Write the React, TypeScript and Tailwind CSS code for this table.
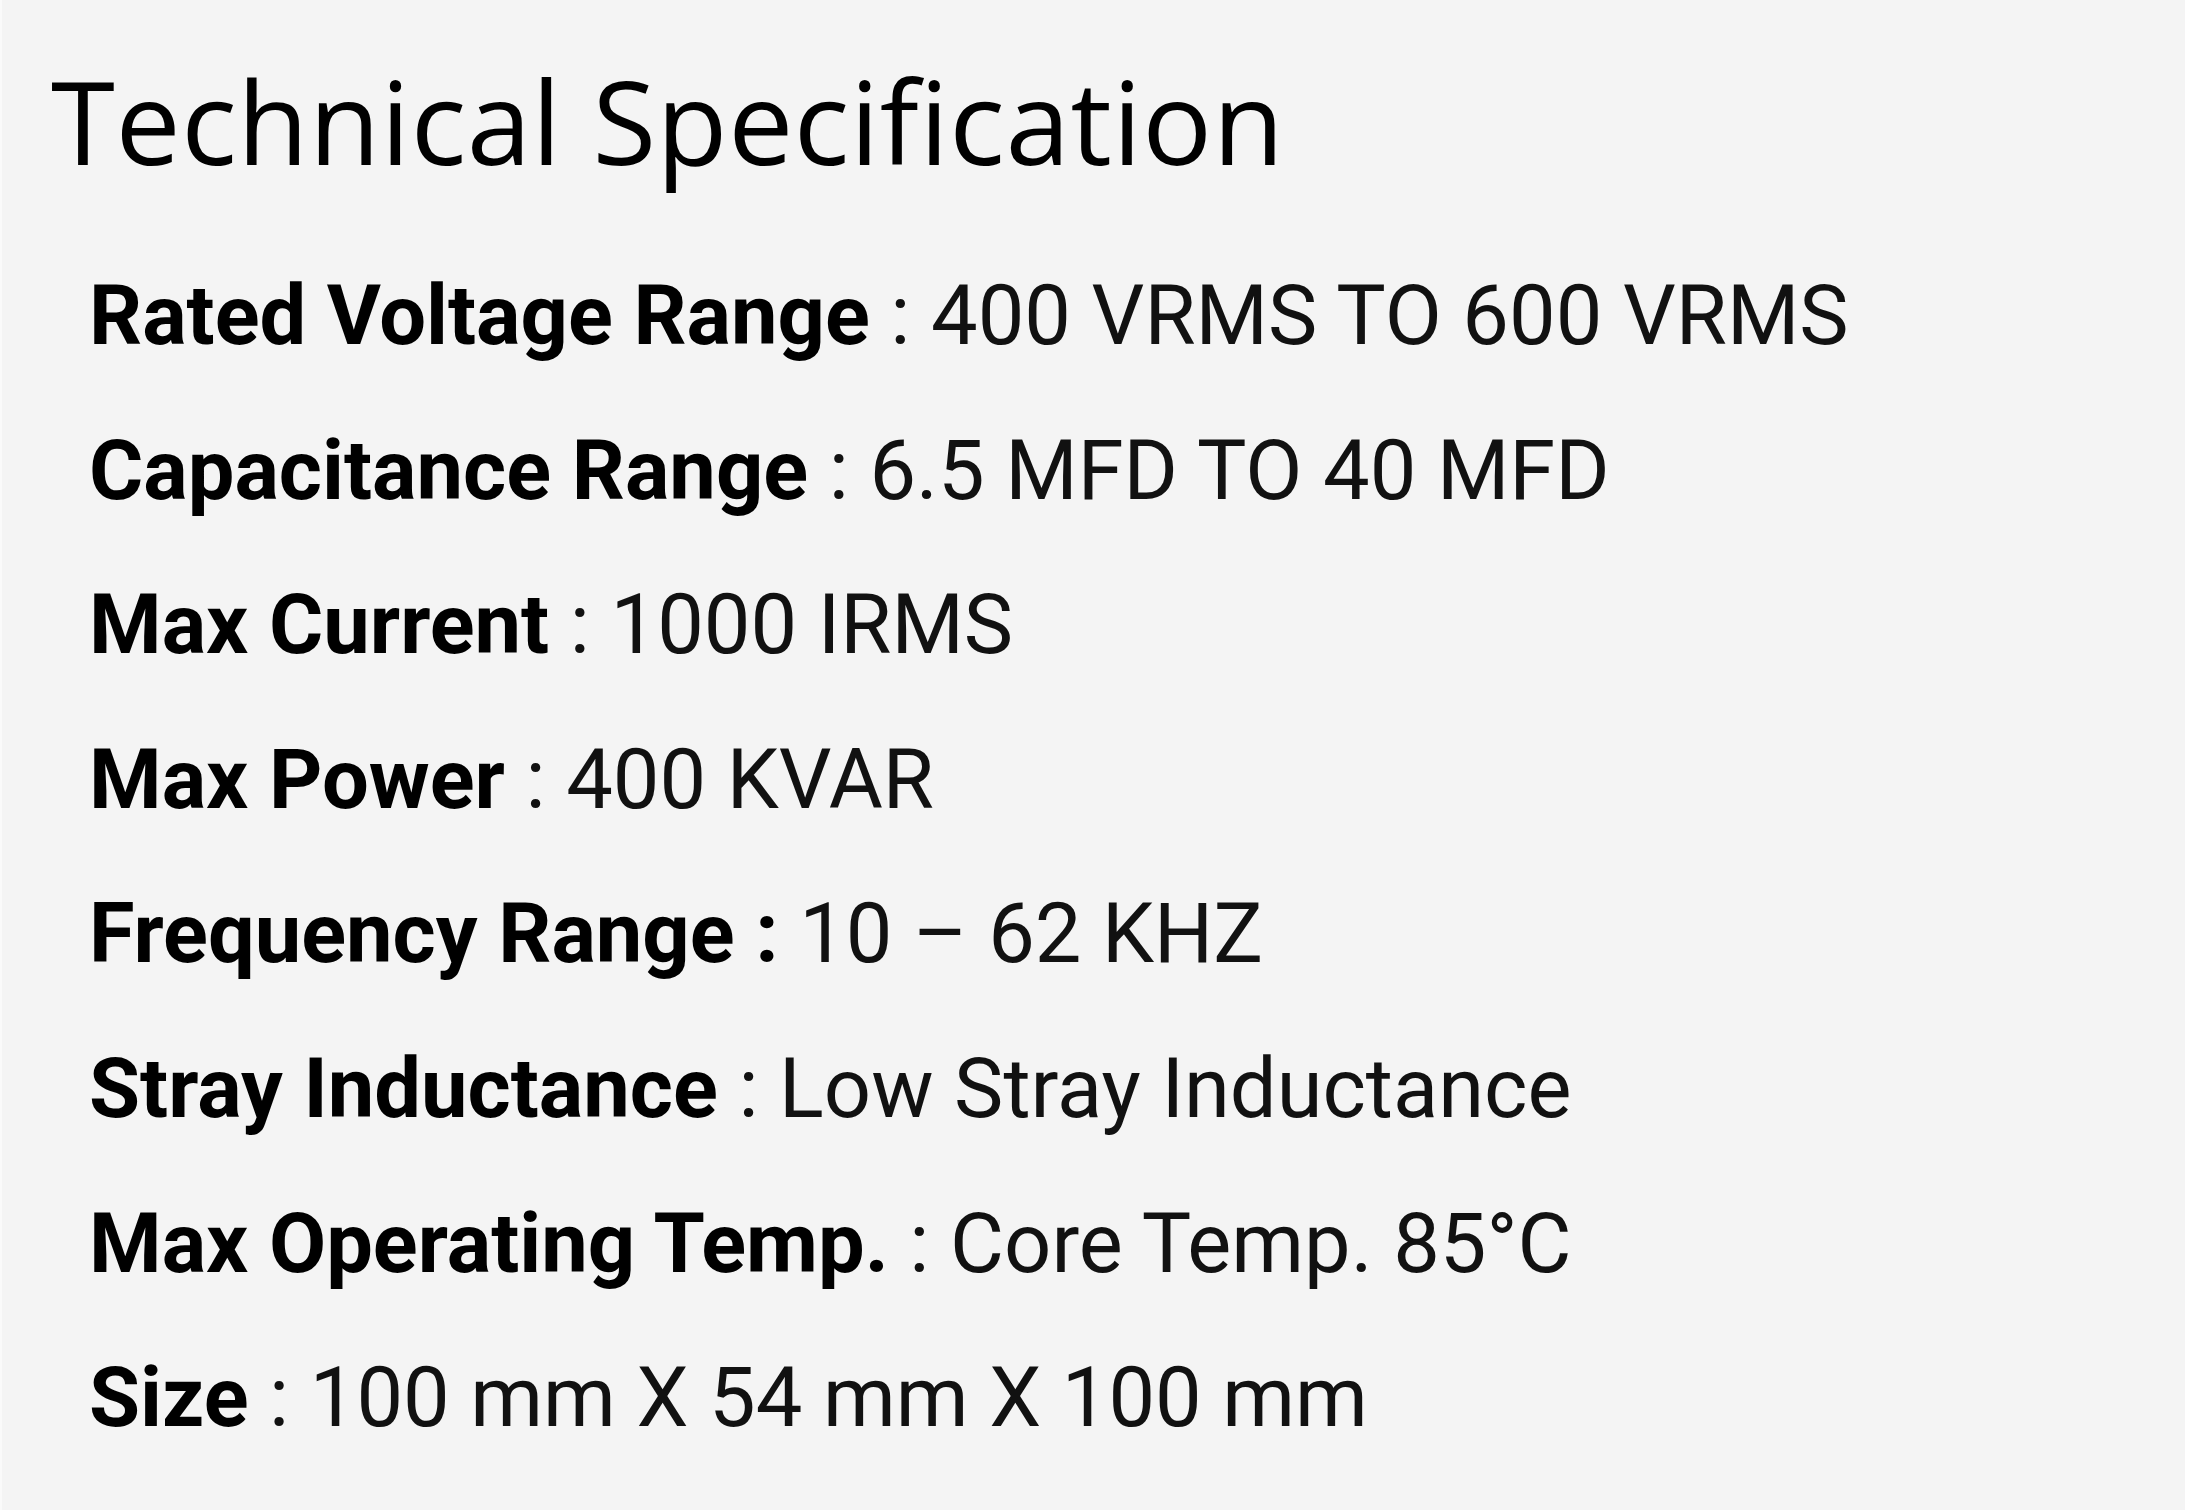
const specs = [
  { label: 'Rated Voltage Range', sep: ' : ', value: '400 VRMS TO 600 VRMS' },
  { label: 'Capacitance Range', sep: ' : ', value: '6.5 MFD TO 40 MFD' },
  { label: 'Max Current', sep: ' : ', value: '1000 IRMS' },
  { label: 'Max Power', sep: ' : ', value: '400 KVAR' },
  { label: 'Frequency Range :', sep: ' ', value: '10 – 62 KHZ' },
  { label: 'Stray Inductance', sep: ' : ', value: 'Low Stray Inductance' },
  { label: 'Max Operating Temp.', sep: ' : ', value: 'Core Temp. 85°C' },
  { label: 'Size', sep: ' : ', value: '100 mm X 54 mm X 100 mm' },
]

export default function App() {
  return (
    <div className="min-h-screen w-full bg-[#f4f4f4] border-l-2 border-[#fafafa]">
      <h1 className="pl-[49px] pt-[62px] text-[116px] leading-[116px] tracking-[0.005em] text-black font-['Open_Sans',sans-serif] font-normal">
        Technical Specification
      </h1>
      <ul className="mt-[61px] pl-[87px] font-['Roboto',sans-serif] text-[83px] leading-[154.6px] text-[#111]">
        {specs.map((s, i) => (
          <li key={i} className="whitespace-nowrap">
            <span className="font-bold text-black">{s.label}</span>
            <span>{s.sep}{s.value}</span>
          </li>
        ))}
      </ul>
    </div>
  )
}
